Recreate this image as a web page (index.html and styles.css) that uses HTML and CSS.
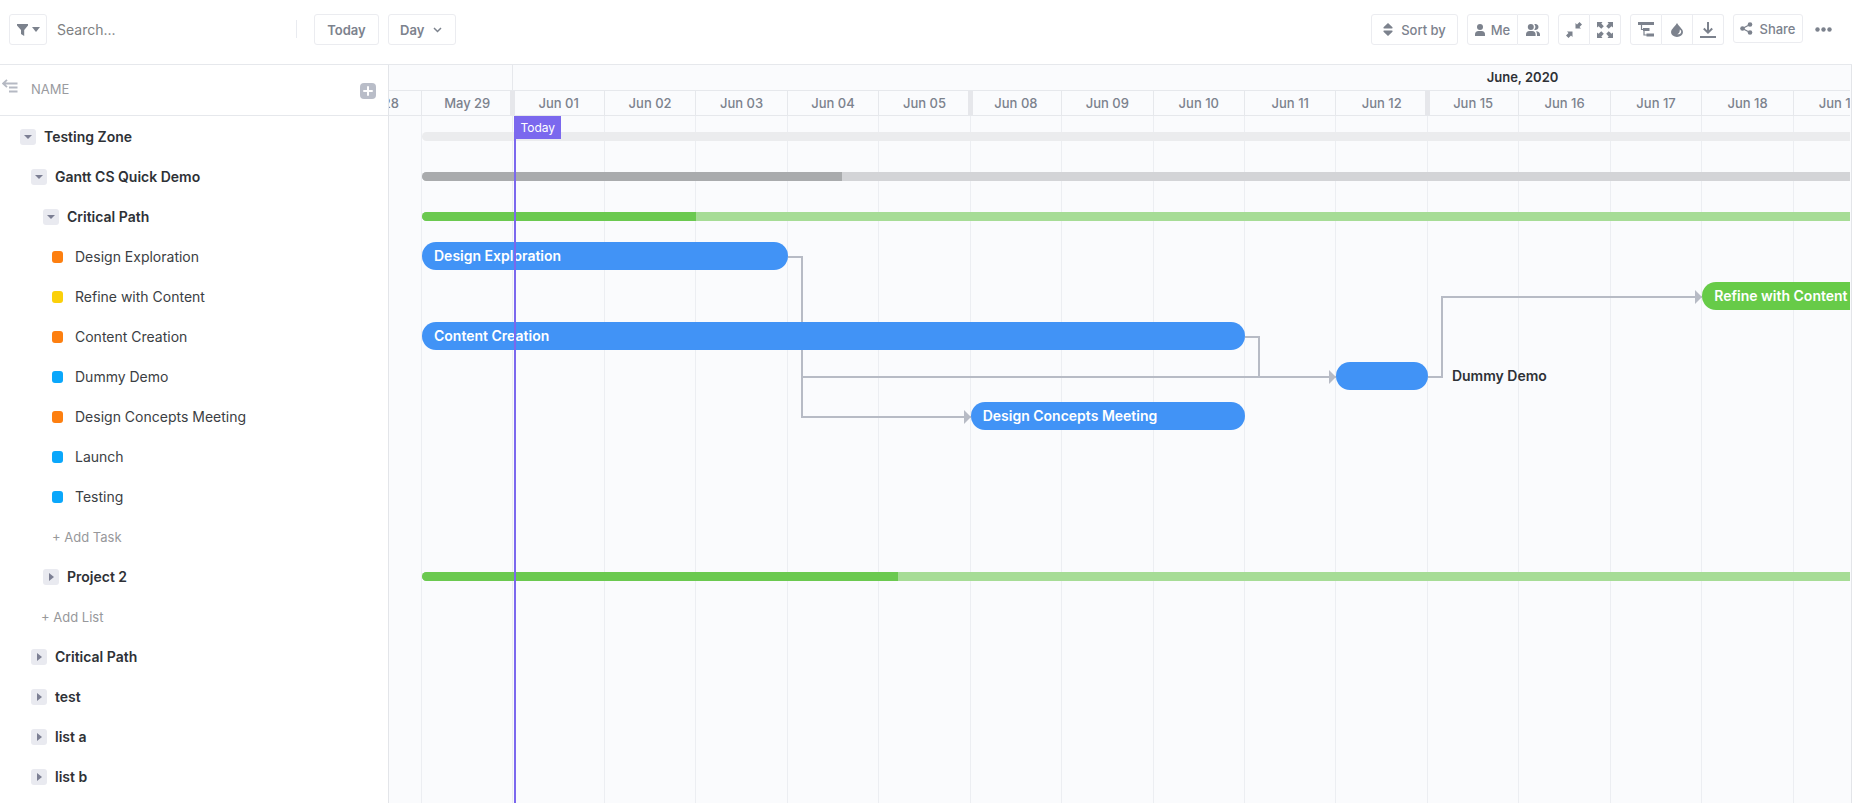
FILE: index.html
```html
<!DOCTYPE html>
<html lang="en">
<head>
<meta charset="utf-8">
<title>Gantt</title>
<link rel="stylesheet" href="styles.css">
</head>
<body>
<div class="app">
  <header class="toolbar">
    <button class="btn btn-filter" aria-label="Filter">
      <svg width="11" height="12" viewBox="0 0 11 12"><path d="M0 0h11v1.500L7.200 6v6L4 10V6L0 1.500z"/></svg>
      <svg width="8" height="5" viewBox="0 0 8 5"><path d="M0 0h8L4 5z"/></svg>
    </button>
    <input class="search" type="text" placeholder="Search..." aria-label="Search">
    <span class="divider"></span>
    <button class="btn btn-today">Today</button>
    <label class="scale">
      <select class="btn scale-select" aria-label="Time scale"><option>Day</option></select>
      <svg class="scale-arrow" width="9" height="6" viewBox="0 0 9 6"><path d="M1 1l3.500 3.500L8 1"/></svg>
    </label>

    <div class="actions">
      <button class="btn btn-sort">
        <svg width="10" height="13" viewBox="0 0 10 13"><path d="M5 0l4.500 4.300q.5 1.200-.8 1.200H1.300Q0 5.500.5 4.300zM5 13L.5 8.700Q0 7.500 1.300 7.500h7.400q1.300 0 .8 1.200z"/></svg>
        Sort by
      </button>
      <div class="group">
        <button class="btn btn-me">
          <svg width="10" height="12" viewBox="0 0 10 12"><circle cx="5" cy="3" r="3"/><path d="M0 12v-1.500Q0 7 3.500 7h3Q10 7 10 10.500V12z"/></svg>
          Me
        </button>
        <button class="btn btn-icon" aria-label="Assignees">
          <svg width="14" height="12" viewBox="0 0 14 12"><circle cx="4.800" cy="3" r="3"/><path d="M0 12v-1.500Q0 7 3.500 7h2.600q3.500 0 3.500 3.500V12zM8.200.300a3 3 0 1 1 0 5.400 4 4 0 0 0 0-5.400zM10 7.200q4 .3 4 3.300V12h-3v-1.500q0-2-1-3.300z"/></svg>
        </button>
      </div>
      <div class="group">
        <button class="btn btn-icon" aria-label="Collapse">
          <svg width="16" height="16" viewBox="0 0 16 16"><path d="M9.500 6.500V1l1.500 1.500L13.500 0 16 2.500 13.500 5 15 6.500zM6.500 9.500V15L5 13.500 2.500 16 0 13.500 2.500 11 1 9.500z"/></svg>
        </button>
        <button class="btn btn-icon" aria-label="Expand">
          <svg width="16" height="16" viewBox="0 0 16 16"><path d="M0 0h5.500L4.300 1.500l2.500 2.800-2.500 2.500-2.800-2.500L0 5.500zM16 0v5.500l-1.500-1.200-2.800 2.500-2.500-2.500 2.500-2.800L10.500 0zM0 16v-5.500l1.500 1.200 2.800-2.500 2.500 2.500-2.500 2.800L5.500 16zM16 16h-5.500l1.200-1.500-2.500-2.800 2.500-2.500 2.800 2.500 1.500-1.200z"/></svg>
        </button>
      </div>
      <div class="group">
        <button class="btn btn-icon" aria-label="Critical path">
          <svg width="16" height="15" viewBox="0 0 16 15"><path d="M0 0h16v3H0zM5 6h6.500v3H5zM8.500 11.500H16v3H8.500z"/><path class="thin" d="M3.500 3v4.500H6M6 9v4h3"/></svg>
        </button>
        <button class="btn btn-icon" aria-label="Color">
          <svg width="12" height="14" viewBox="0 0 12 14"><path fill-rule="evenodd" d="M6 0q1 2 3.500 4.500Q12 7 12 9a6 5 0 0 1-12 0q0-2 2.500-4.500Q5 2 6 0zM8.800 6.500q.3 3.500-2.600 4.800 3.600.2 4-2.600 0-1.400-1.400-2.200z"/></svg>
        </button>
        <button class="btn btn-icon" aria-label="Download">
          <svg width="16" height="16" viewBox="0 0 16 16"><path d="M0 14h16v2H0z"/><path class="line" d="M8 0v10.500M3.800 6.500L8 10.700l4.200-4.200"/></svg>
        </button>
      </div>
      <button class="btn btn-share">
        <svg width="13" height="13" viewBox="0 0 13 13"><circle cx="2.500" cy="6.500" r="2.300"/><circle cx="10" cy="2.500" r="2.300"/><circle cx="10" cy="10.500" r="2.300"/><path class="thin" d="M10 2.500l-7.500 4 7.500 4"/></svg>
        Share
      </button>
      <button class="btn-more" aria-label="More">
        <svg width="17" height="5" viewBox="0 0 17 5"><circle cx="2.500" cy="2.500" r="2.200"/><circle cx="8.500" cy="2.500" r="2.200"/><circle cx="14.500" cy="2.500" r="2.200"/></svg>
      </button>
    </div>
  </header>

  <main class="gantt">
    <aside class="sidebar">
      <div class="sidebar-head">
        <button class="btn-collapse" aria-label="Collapse sidebar">
          <svg width="16" height="14" viewBox="0 0 16 14"><path d="M5 .8L1 4.500l4 3.700M1 4.500h14.500M7 8.500h8.500M7 12.500h8.500"/></svg>
        </button>
        <span class="sidebar-title">NAME</span>
        <button class="btn-add" aria-label="Add column">
          <svg width="10" height="10" viewBox="0 0 10 10"><path d="M5 1v8M1 5h8"/></svg>
        </button>
      </div>
      <ul class="tree">
        <li class="node level-1"><button class="toggle open" aria-label="Toggle"></button>Testing Zone</li>
        <li class="node level-2"><button class="toggle open" aria-label="Toggle"></button>Gantt CS Quick Demo</li>
        <li class="node level-3"><button class="toggle open" aria-label="Toggle"></button>Critical Path</li>
        <li class="node task"><span class="status orange"></span>Design Exploration</li>
        <li class="node task"><span class="status yellow"></span>Refine with Content</li>
        <li class="node task"><span class="status orange"></span>Content Creation</li>
        <li class="node task"><span class="status cyan"></span>Dummy Demo</li>
        <li class="node task"><span class="status orange"></span>Design Concepts Meeting</li>
        <li class="node task"><span class="status cyan"></span>Launch</li>
        <li class="node task"><span class="status cyan"></span>Testing</li>
        <li class="node task"><button class="link-add">+ Add Task</button></li>
        <li class="node level-3"><button class="toggle" aria-label="Toggle"></button>Project 2</li>
        <li class="node add-list"><button class="link-add">+ Add List</button></li>
        <li class="node level-2"><button class="toggle" aria-label="Toggle"></button>Critical Path</li>
        <li class="node level-2"><button class="toggle" aria-label="Toggle"></button>test</li>
        <li class="node level-2"><button class="toggle" aria-label="Toggle"></button>list a</li>
        <li class="node level-2"><button class="toggle" aria-label="Toggle"></button>list b</li>
      </ul>
    </aside>

    <section class="timeline">
      <div class="months days-grid">
        <div class="month month-prev"></div>
        <div class="month month-current"><span class="month-label">June, 2020</span></div>
      </div>
      <div class="days days-grid">
        <div class="day day-first">May 28</div>
        <div class="day week-end">May 29</div>
        <div class="day">Jun 01</div>
        <div class="day">Jun 02</div>
        <div class="day">Jun 03</div>
        <div class="day">Jun 04</div>
        <div class="day week-end">Jun 05</div>
        <div class="day">Jun 08</div>
        <div class="day">Jun 09</div>
        <div class="day">Jun 10</div>
        <div class="day">Jun 11</div>
        <div class="day week-end">Jun 12</div>
        <div class="day">Jun 15</div>
        <div class="day">Jun 16</div>
        <div class="day">Jun 17</div>
        <div class="day">Jun 18</div>
        <div class="day day-last">Jun 19</div>
      </div>
      <div class="chart">
        <div class="columns days-grid">
          <i></i><i></i><i></i><i></i><i></i><i></i><i></i><i></i><i></i><i></i><i></i><i></i><i></i><i></i><i></i><i></i>
        </div>
        <div class="rows days-grid">
          <div class="link-down from-exploration"></div>
          <div class="link-run run-concepts"></div>
          <div class="link-run run-dummy"></div>
          <div class="link-down from-creation"></div>
          <div class="link-up from-dummy"></div>
          <div class="link-run run-refine"></div>

          <div class="summary zone"></div>
          <div class="summary demo"><div class="done" style="width: 29.4%"></div></div>
          <div class="summary critical"><div class="done" style="width: 19.2%"></div></div>
          <div class="summary project"><div class="done" style="width: 33.3%"></div></div>

          <div class="bar bar-exploration">Design Exploration</div>
          <div class="bar bar-refine">Refine with Content</div>
          <div class="bar bar-creation">Content Creation</div>
          <div class="bar bar-dummy"></div>
          <div class="bar-label">Dummy Demo</div>
          <div class="bar bar-concepts">Design Concepts Meeting</div>
          <div class="today"><span class="today-label">Today</span></div>
        </div>
      </div>
    </section>
  </main>
</div>
</body>
</html>
```

FILE: styles.css
```css
* { box-sizing: border-box; }

body {
  margin: 0;
  background: #fff;
  color: #2e3136;
  font: 14px/20px Inter, "Open Sans", sans-serif;
}

button, input, select { font: inherit; color: inherit; margin: 0; }
button { cursor: pointer; padding: 0; border: 0; background: none; }
svg { display: block; flex: none; fill: #7c828d; }

.app {
  display: flex;
  flex-direction: column;
  height: 100vh;
  overflow: hidden;
}

/* Toolbar */
.toolbar {
  display: flex;
  align-items: flex-start;
  flex: none;
  height: 65px;
  padding: 14px 20px 0 9px;
  border-bottom: 1px solid #e6e8ec;
  color: #7c828d;
}
.btn {
  display: flex;
  align-items: center;
  justify-content: center;
  height: 31px;
  border: 1px solid #ebecf0;
  border-radius: 3px;
  background: #fff;
}
.btn-filter { width: 38px; gap: 4px; }
.search {
  width: 240px;
  height: 31px;
  margin-left: 2px;
  padding: 0 8px;
  border: 0;
  outline: 0;
  background: none;
}
.search::placeholder { color: #7e7f82; opacity: 1; }
.divider {
  width: 1px;
  height: 18px;
  margin: 6px 17px 0 7px;
  background: #e9ebf0;
}
.btn-today { width: 65px; font-size: 13px; font-weight: 600; }
.scale { position: relative; margin-left: 9px; }
.scale-select {
  width: 68px;
  padding: 0 11px;
  appearance: none;
  outline: 0;
  font-size: 13px;
  font-weight: 600;
}
.scale-arrow { position: absolute; top: 13px; right: 14px; pointer-events: none; }
.scale-arrow path { fill: none; stroke: #7c828d; stroke-width: 1.500; }

.actions { display: flex; gap: 9px; margin-left: auto; }
.btn-sort { width: 87px; gap: 8px; font-weight: 500; font-size: 13px; }
.group { display: flex; }
.group .btn { border-radius: 0 3px 3px 0; }
.group .btn + .btn { border-left: 0; }
.group .btn:first-child { border-radius: 3px 0 0 3px; }
.group .btn:nth-child(2):not(:last-child) { border-radius: 0; }
.btn-me { width: 51px; gap: 6px; font-weight: 500; font-size: 13px; }
.btn-icon { width: 31px; }
.group .btn-icon:first-child { width: 32px; }
.btn-share { width: 70px; height: 29px; gap: 6px; font-weight: 500; font-size: 13px; }
.btn-more { height: 31px; margin-left: 3px; }
.thin { fill: none; stroke: #7c828d; stroke-width: 1.200; }
.line { fill: none; stroke: #7c828d; stroke-width: 2; }

/* Sidebar */
.gantt { display: flex; flex: 1; min-height: 0; }
.sidebar {
  display: flex;
  flex-direction: column;
  flex: none;
  width: 389px;
  border-right: 1px solid #e3e5e9;
}
.sidebar-head {
  display: flex;
  align-items: flex-start;
  flex: none;
  height: 51px;
  padding: 14px 12px 0 2px;
  border-bottom: 1px solid #e6e8ec;
}
.btn-collapse path { fill: none; stroke: #b5b9c3; stroke-width: 1.800; }
.sidebar-title { margin-left: 13px; font-size: 13px; color: #9a9b9f; }
.btn-add {
  display: flex;
  align-items: center;
  justify-content: center;
  width: 16px;
  height: 16px;
  margin: 4px 0 0 auto;
  border-radius: 4px;
  background: #b9bdc8;
}
.btn-add path { stroke: #fff; stroke-width: 2; stroke-linecap: round; }

.tree { margin: 0; padding: 1px 0 0; list-style: none; }
.node {
  display: flex;
  align-items: center;
  gap: 8px;
  height: 40px;
  font-weight: 600;
}
.level-1 { padding-left: 20px; }
.level-2 { padding-left: 31px; }
.level-3 { padding-left: 43px; }
.task { gap: 12px; padding-left: 52px; font-weight: 400; color: #3b3e43; }
.add-list { padding-left: 41px; }
.toggle {
  display: flex;
  align-items: center;
  justify-content: center;
  width: 16px;
  height: 16px;
  border-radius: 3px;
  background: #e9eaf0;
}
.toggle::before {
  content: "";
  border: 4px solid transparent;
  border-left: 5px solid #7c7f93;
  border-right: 0;
}
.toggle.open::before {
  border: 4px solid transparent;
  border-top: 4px solid #7c7f93;
  border-bottom: 0;
}
.status { width: 11px; height: 12px; border-radius: 3px; }
.orange { background: #fd7f10; }
.yellow { background: #fbd00a; }
.cyan { background: #0aa7fb; }
.link-add { font-size: 13px; font-weight: 400; color: #97989b; }

/* Timeline */
.timeline {
  display: flex;
  flex-direction: column;
  flex: 1;
  min-width: 0;
  padding-right: 1px;
  border-right: 1px solid #e3e5e9;
  background: #fafbfd;
}
.days-grid {
  display: grid;
  grid-template-columns: 33px repeat(15, minmax(0, 13fr)) minmax(0, 8fr);
}
.months { height: 26px; border-bottom: 1px solid #e6e8ec; }
.month-prev { grid-column: 1 / 3; border-right: 1px solid #e6e8ec; }
.month-current { grid-column: 3 / -1; overflow: hidden; }
.month-label {
  display: block;
  width: 151%;
  line-height: 24px;
  text-align: center;
  font-size: 13px;
  font-weight: 600;
}
.days { height: 25px; border-bottom: 1px solid #e6e8ec; }
.day {
  position: relative;
  display: flex;
  justify-content: center;
  border-right: 1px solid #e6e8ec;
  white-space: nowrap;
  font-size: 13px;
  line-height: 24px;
  font-weight: 500;
  color: #7c828d;
}
.day-first { justify-content: flex-end; padding-right: 22px; overflow: hidden; }
.day-last { justify-content: flex-start; padding-left: 25px; overflow: hidden; border-right: 0; }
.week-end::after {
  content: "";
  position: absolute;
  top: 0;
  bottom: 0;
  right: -3px;
  width: 5px;
  background: #e6e7eb;
}

/* The column lines and the task rows share one cell */
.chart { display: grid; flex: 1; min-height: 0; overflow: hidden; }
.columns, .rows { grid-area: 1 / 1; min-width: 0; }
.columns i { border-right: 1px solid #eceef2; }
.rows { grid-template-rows: repeat(17, 40px) 1fr; z-index: 1; }

.summary {
  grid-column: 2 / -1;
  align-self: center;
  height: 9px;
  border-radius: 5px 0 0 5px;
  overflow: hidden;
}
.done { height: 100%; }
.zone { grid-row: 1; background: #ebecee; }
.demo { grid-row: 2; background: #d3d4d7; }
.demo .done { background: #a9abad; }
.critical { grid-row: 3; background: #a6dc96; }
.project { grid-row: 12; background: #a6dc96; }
.critical .done, .project .done { background: #6bc950; }

.bar {
  align-self: center;
  height: 28px;
  padding: 0 12px;
  border-radius: 14px;
  background: #4193f6;
  color: #fff;
  font-weight: 600;
  line-height: 28px;
  white-space: nowrap;
}
.bar-exploration { grid-area: 4 / 2 / 5 / 6; }
.bar-refine { grid-area: 5 / 16 / 6 / -1; border-radius: 14px 0 0 14px; background: #67cb48; overflow: hidden; }
.bar-creation { grid-area: 6 / 2 / 7 / 11; }
.bar-dummy { grid-area: 7 / 12 / 8 / 13; }
.bar-concepts { grid-area: 8 / 8 / 9 / 11; }
.bar-label { grid-area: 7 / 13 / 8 / 16; align-self: center; padding-left: 24px; font-weight: 600; }

/* Dependency lines: a short bend off the bar, then a run into the next one */
.link-down, .link-up { width: 15px; margin: 20px 0 18px; border: 0 solid #b7bbc5; }
.link-down { border-width: 2px 2px 0 0; }
.link-up { border-width: 0 2px 2px 0; }
.from-exploration { grid-area: 4 / 6 / 9 / 7; }
.from-creation { grid-area: 6 / 11 / 8 / 12; }
.from-dummy { grid-area: 5 / 13 / 8 / 14; }
.link-run {
  position: relative;
  height: 2px;
  margin: 20px 0 0 13px;
  background: #b7bbc5;
}
.link-run::after {
  content: "";
  position: absolute;
  top: -6px;
  right: 0;
  border: 7px solid transparent;
  border-left-color: #b7bbc5;
  border-right: 0;
}
.run-concepts { grid-area: 8 / 6 / 9 / 8; }
.run-dummy { grid-area: 7 / 6 / 8 / 12; }
.run-refine { grid-area: 5 / 13 / 6 / 16; }

.today {
  grid-area: 1 / 3 / -1 / 4;
  justify-self: start;
  margin-left: 1px;
  border-left: 2px solid #7b68ee;
  z-index: 2;
}
.today-label {
  display: block;
  padding: 0 6px 0 4px;
  background: #7b68ee;
  color: #fff;
  font-size: 12px;
  line-height: 23px;
}
```
